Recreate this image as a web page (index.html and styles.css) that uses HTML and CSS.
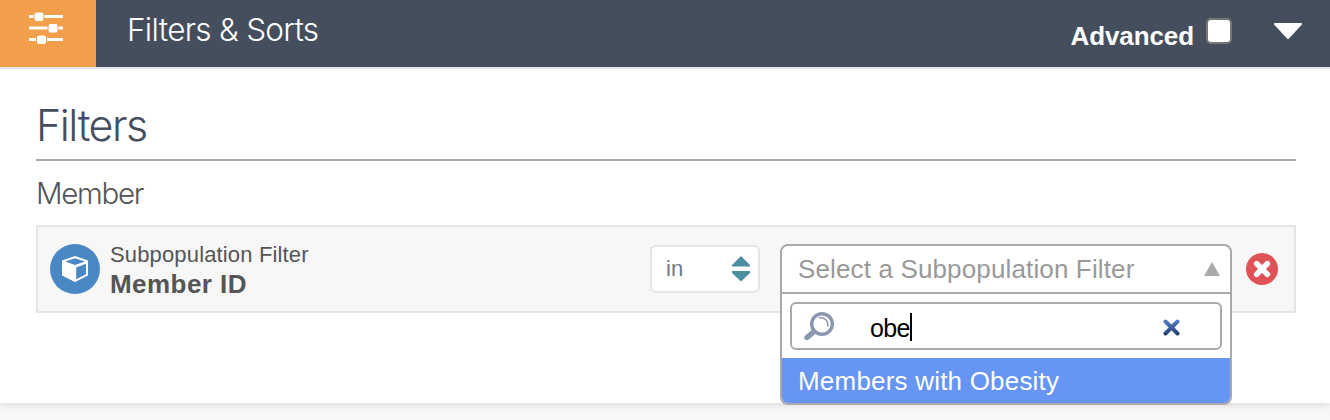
FILE: index.html
```
<!DOCTYPE html>
<html lang="en">
<head>
<meta charset="utf-8">
<title>Filters &amp; Sorts</title>
<link rel="stylesheet" href="styles.css">
</head>
<body>
<section class="panel">
  <header class="bar">
    <div class="bar-icon">
      <svg width="36" height="34" viewBox="0 0 36 34">
        <path d="M1 4.500H35M1 16H35M1 27.500H35" stroke="#fff" stroke-width="3"/>
        <g fill="#fff" stroke="#f19f4b" stroke-width="1">
          <rect x="6" y="0" width="10" height="9.500" rx="2.500"/>
          <rect x="20" y="11.500" width="10" height="9.500" rx="2.500"/>
          <rect x="8.500" y="23" width="10" height="9.500" rx="2.500"/>
        </g>
      </svg>
    </div>
    <h1 class="bar-title"><span>Filters &amp; Sorts</span></h1>
    <label class="advanced"><span class="advanced-text">Advanced</span><span class="checkbox"></span></label>
    <svg class="caret" width="30" height="18" viewBox="0 0 30 18"><path d="M2 2H28L15 16Z" fill="#fff" stroke="#fff" stroke-width="2" stroke-linejoin="round"/></svg>
  </header>
  <main class="content">
    <h2 class="heading"><span>Filters</span></h2>
    <h3 class="group"><span>Member</span></h3>
    <div class="row">
      <svg class="cube" width="50" height="50" viewBox="0 0 50 50">
        <circle cx="25" cy="25" r="25" fill="#4a87c5"/>
        <path d="M12 16.500L25 12L38 16.500V31.500L25 38L12 31.500Z" fill="#fff"/>
        <path d="M15.300 17.500L25 14.300L35 17.500L25 21Z" fill="#4a87c5"/>
        <path d="M26.200 23.500L36 19.800V30.300L26.200 35.200Z" fill="#4a87c5"/>
      </svg>
      <div class="labels">
        <span class="kind">Subpopulation Filter</span>
        <strong class="field">Member ID</strong>
      </div>
      <div class="operator">
        <span>in</span>
        <svg width="18" height="26" viewBox="0 0 18 26" fill="#4a8f9f"><path d="M9 0L18 9V10.500H0V9ZM9 25.500L18 17V15H0V17Z"/></svg>
      </div>
      <div class="picker">
        <div class="dropdown">
          <div class="selected">
            <span class="placeholder">Select a Subpopulation Filter</span>
            <svg width="16" height="14" viewBox="0 0 16 14"><path d="M8 0L16 14H0Z" fill="#aaa"/></svg>
          </div>
          <div class="search">
            <svg class="lens" width="32" height="30" viewBox="0 0 32 30" fill="none" stroke="#8b97b2">
              <circle cx="18" cy="12" r="10.300" stroke-width="3.400"/>
              <path d="M15 6C21 5 24.500 9 23.800 14.500" stroke-width="1.500"/>
              <path d="M11 19L8.500 21.500" stroke-width="4"/>
              <path d="M8.300 21L3 25.500" stroke-width="5.500" stroke-linecap="round"/>
            </svg>
            <span class="query">obe</span><span class="cursor"></span>
            <svg class="clear" width="17" height="17" viewBox="0 0 17 17">
              <defs><linearGradient id="clear-fill" gradientUnits="userSpaceOnUse" x1="0" y1="0" x2="0" y2="17"><stop offset="0" stop-color="#5585cf"/><stop offset="1" stop-color="#263a6b"/></linearGradient></defs>
              <path d="M2.500 2.500L14.500 14.500M14.500 2.500L2.500 14.500" stroke="url(#clear-fill)" stroke-width="4" stroke-linecap="round"/>
            </svg>
          </div>
          <div class="option"><span>Members with Obesity</span></div>
        </div>
      </div>
      <svg class="remove" width="32" height="32" viewBox="0 0 32 32"><circle cx="16" cy="16" r="16" fill="#df5357"/><path d="M10.700 10.700L21.300 21.300M21.300 10.700L10.700 21.300" stroke="#fff" stroke-width="5.500" stroke-linecap="round"/></svg>
    </div>
  </main>
</section>
</body>
</html>
```
FILE: styles.css
```
* { box-sizing: border-box; }
body {
  margin: 0;
  height: 420px;
  overflow: hidden;
  background: #f7f7f7;
  font-family: "Liberation Sans", Arial, sans-serif;
  color: #555;
}
svg { display: block; flex: none; }
h1, h2, h3 { margin: 0; font-family: Inter, "Liberation Sans", sans-serif; white-space: nowrap; }
.panel { height: 403px; background: #fff; box-shadow: 0 1px 8px rgba(0, 0, 0, .14); }
.bar { display: flex; height: 69px; background: #454e5d; border-bottom: 2px solid #e6e6ea; color: #fff; }
.bar-icon { width: 96px; padding: 12px 0 0 28px; background: #f19f4b; }
.bar-title { flex: 1; padding-left: 31px; font-size: 31.5px; font-weight: 300; line-height: 60px; letter-spacing: -.7px; }
.advanced { display: flex; gap: 12px; font-size: 26px; font-weight: bold; line-height: 72px; }
.advanced-text { letter-spacing: -.1px; }
.checkbox { width: 26px; height: 26px; margin-top: 18px; background: #fff; border: 2px solid #767676; border-radius: 5px; }
.caret { margin: 22px 27px 0 41px; }
.content { padding: 34px 34px 0 36px; }
.heading { height: 58px; border-bottom: 2px solid #aaa; color: #454e5d; font-size: 43px; font-weight: 300; line-height: 44px; letter-spacing: -1.5px; }
.group { height: 64px; padding-top: 17px; font-size: 29.5px; font-weight: 300; line-height: 30px; letter-spacing: -1.3px; }
.row { display: flex; height: 88px; padding: 0 16px 0 12px; background: #f7f7f7; border: 2px solid #e5e5e5; }
.cube { margin-top: 17px; }
.labels { display: flex; flex: 1; flex-direction: column; padding: 14px 0 0 10px; white-space: nowrap; }
.kind { font-size: 22px; line-height: 28px; letter-spacing: .15px; }
.field { font-size: 26px; line-height: 31px; letter-spacing: .45px; }
.operator { display: flex; justify-content: space-between; width: 110px; height: 48px; margin-top: 18px; padding: 9px 8px 0 14px; background: #fff; border: 2px solid #e5e5e5; border-radius: 6px; color: #737887; font-size: 22px; line-height: 25px; }
.picker { position: relative; width: 452px; margin: 17px 14px 0 20px; }
.dropdown { position: absolute; inset: 0 auto auto 0; width: 452px; height: 161px; overflow: hidden; background: #fff; border: 2px solid #aaa; border-radius: 8px; white-space: nowrap; }
.selected { display: flex; align-items: center; justify-content: space-between; height: 48px; padding: 0 10px 0 16px; border-bottom: 2px solid #aaa; color: #999; font-size: 26px; line-height: 46px; letter-spacing: .14px; }
.search { display: flex; height: 48px; margin: 8px; padding: 0 40px 0 12px; border: 2px solid #aaa; border-radius: 6px; color: #000; font-size: 25px; line-height: 48px; }
.lens { margin-top: 8px; }
.query { margin-left: 34px; letter-spacing: -.6px; }
.cursor { width: 2px; height: 28px; margin-top: 9px; background: #000; }
.clear { margin: 15px 0 0 auto; }
.option { height: 46px; padding-left: 16px; background: #6695f3; color: #fff; font-size: 26px; line-height: 46px; letter-spacing: .2px; }
.remove { margin-top: 26px; }
```
